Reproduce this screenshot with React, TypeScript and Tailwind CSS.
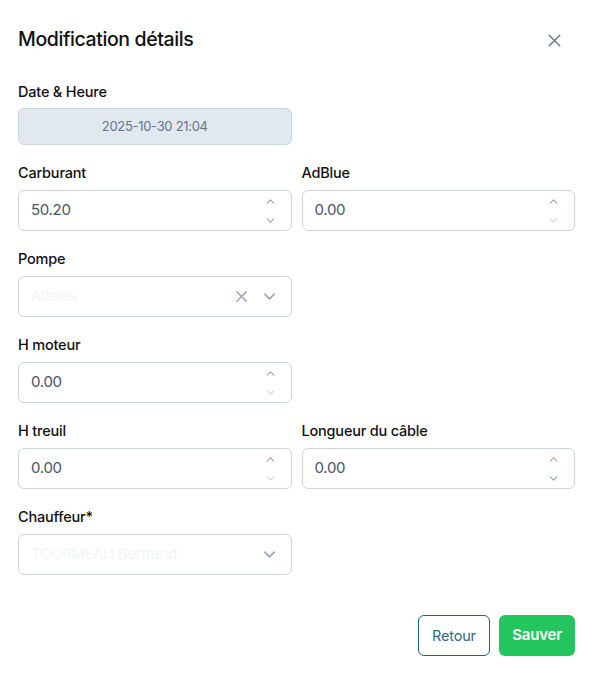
import { ChevronDown, ChevronUp, X } from 'lucide-react';

const font = { fontFamily: 'Inter, "Noto Sans", sans-serif' };

function NumberField({ label, value, downMuted }: { label: string; value: string; downMuted?: boolean }) {
  return (
    <div>
      <label className="block text-[14.5px] font-medium leading-5 text-[#111] tracking-[-0.2px] mb-[7px]">{label}</label>
      <div className="flex items-center h-[41px] rounded-md border border-[#cbd5e1] bg-white pl-3 pr-[14px]">
        <span className="flex-1 text-[15px] text-[#475569] tracking-[-0.3px]">{value}</span>
        <div className="flex flex-col items-center gap-[6px]">
          <ChevronUp className="w-[13px] h-[13px] text-[#94a3b8]" strokeWidth={2} />
          <ChevronDown className={`w-[13px] h-[13px] ${downMuted ? 'text-[#cbd5e1]' : 'text-[#94a3b8]'}`} strokeWidth={2} />
        </div>
      </div>
    </div>
  );
}

function SelectField({ label, placeholder, clearable }: { label: string; placeholder: string; clearable?: boolean }) {
  return (
    <div>
      <label className="block text-[14.5px] font-medium leading-5 text-[#111] tracking-[-0.2px] mb-[7px]">{label}</label>
      <div className="flex items-center h-[41px] rounded-md border border-[#cbd5e1] bg-white pl-3 pr-[12px]">
        <span className="flex-1 text-[15px] text-[#f3f5f8] tracking-[-0.3px]">{placeholder}</span>
        {clearable && <X className="w-[19px] h-[19px] text-[#94a3b8] mr-[9px]" strokeWidth={1.8} />}
        <ChevronDown className="w-[19px] h-[19px] text-[#94a3b8]" strokeWidth={1.8} />
      </div>
    </div>
  );
}

export default function App() {
  return (
    <div className="w-[592px] h-[676px] bg-white pl-[18px] pr-[17px] pt-[28px]" style={font}>
      <div className="flex items-center justify-between h-6">
        <h2 className="text-[19.5px] font-medium text-[#111] tracking-[-0.4px]">Modification détails</h2>
        <X className="w-[21px] h-[21px] text-[#64748b] mr-[10px]" strokeWidth={1.6} />
      </div>

      <div className="mt-[30px] grid grid-cols-2 gap-x-[10px] gap-y-[18px]">
        <div>
          <label className="block text-[14.5px] font-medium leading-5 text-[#111] tracking-[-0.2px] mb-[6px]">Date &amp; Heure</label>
          <div className="flex items-center justify-center h-[37px] rounded-md border border-[#cbd5e1] bg-[#e2e8f0] text-[13px] text-[#64748b] tracking-[-0.3px]">
            2025-10-30 21:04
          </div>
        </div>
        <div />

        <NumberField label="Carburant" value="50.20" />
        <NumberField label="AdBlue" value="0.00" downMuted />

        <SelectField label="Pompe" placeholder="Attelas" clearable />
        <div />

        <NumberField label="H moteur" value="0.00" downMuted />
        <div />

        <NumberField label="H treuil" value="0.00" downMuted />
        <NumberField label="Longueur du câble" value="0.00" />

        <SelectField label="Chauffeur*" placeholder="TOURMEAU Bertrand" />
        <div />
      </div>

      <div className="mt-[40px] flex justify-end gap-[9px]">
        <button className="h-[41px] px-[13.5px] rounded-md border border-[#1e6180] text-[#2f6a85] text-[14.5px] tracking-[-0.2px]">Retour</button>
        <button className="h-[41px] px-[13px] rounded-md bg-[#22c55e] text-white text-[15px] font-semibold tracking-[-0.2px]">Sauver</button>
      </div>
    </div>
  );
}
